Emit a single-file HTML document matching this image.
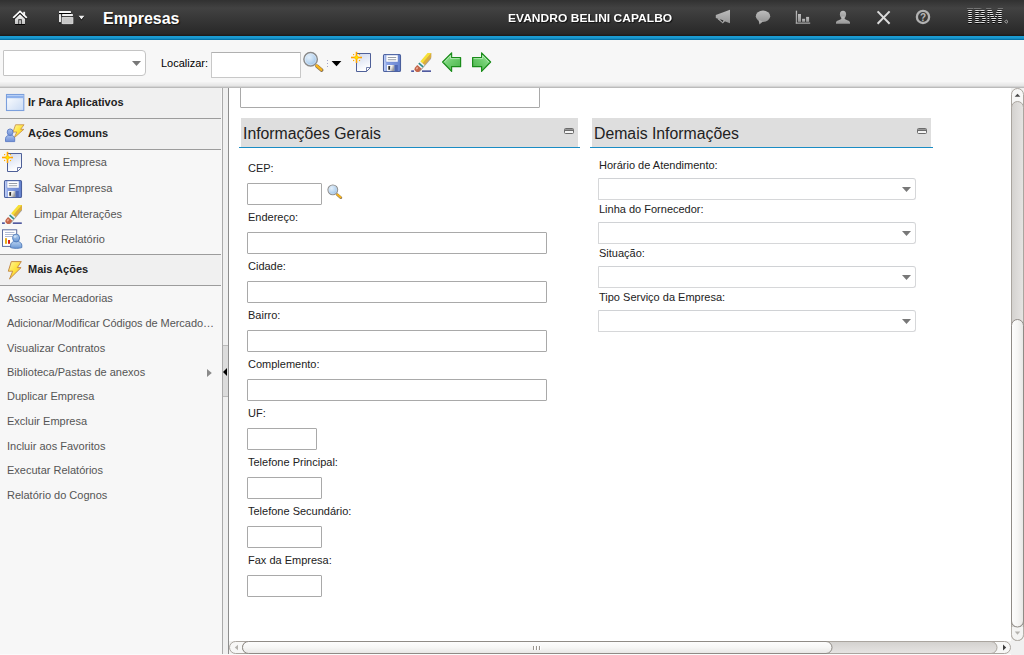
<!DOCTYPE html>
<html lang="pt-BR">
<head>
<meta charset="utf-8">
<title>Empresas</title>
<style>
html,body{margin:0;padding:0}
body{width:1024px;height:655px;position:relative;overflow:hidden;background:#fff;font-family:"Liberation Sans",Arial,sans-serif;font-size:11px;color:#222}
.abs,.abs-all *{position:absolute}
div,span,svg{position:absolute;box-sizing:border-box}
#hdr{left:0;top:0;width:1024px;height:36px;background:linear-gradient(#313131 0px,#424242 8px,#363636 20px,#282828 34px,#1e1e1e 35px,#1c1c1c 36px)}
#blue{left:0;top:36px;width:1024px;height:4px;background:linear-gradient(#1a9cd2 0,#1a9cd2 1px,#1b99cf 1px,#1b99cf 2px,#148ec4 2px,#148ec4 3px,#0673a6 3px)}
#tb{left:0;top:40px;width:1024px;height:48px;background:linear-gradient(#f7f7f7 0,#f7f7f7 42px,#f2f2f2 42px,#f2f2f2 43px,#eee 43px,#eee 44px,#eaeaea 44px,#eaeaea 45px,#e6e6e6 45px,#e6e6e6 46px,#d4d4d4 46px,#d4d4d4 47px,#bbb 47px,#bbb 48px)}
.t{white-space:nowrap;line-height:14px;height:14px}
.title{left:103px;top:9px;font-size:16px;font-weight:bold;color:#fff;line-height:20px;height:20px;text-shadow:1px 1px 1px #111}
.user{left:508px;top:11px;font-size:12px;font-weight:bold;color:#fff;line-height:14px;letter-spacing:.03px;transform:scaleY(.93);transform-origin:0 12px;text-shadow:1px 1px 1px #111}
.inp{background:#fff;border:1px solid #a9a9a9;border-radius:1px}
.sel{background:#fff;border:1px solid #d6d7d9;border-top-color:#d0d2d5;border-radius:0 3px 3px 0}
.sel:after{content:"";position:absolute;right:4px;top:8px;width:9px;height:5px;background:#787878;clip-path:polygon(0 0,100% 0,50% 100%)}
.sel.big:after{top:10px}
#left{left:0;top:88px;width:222px;height:566px;background:#f7f7f7}
.ph{left:0;width:221px;background:#f0f0f0;border-bottom:1px solid #9c9c9c}
.pht{left:28px;font-weight:bold;font-size:11px;color:#222}
.mi{left:34px;color:#555;font-size:11px}
.ma{left:7px;color:#555;font-size:11px}
#div{left:222px;top:88px;width:7px;height:566px;background:#f0f0f0;border-left:1px solid #aaa;border-right:1px solid #8e8e8e}
#main{left:229px;top:88px;width:782px;height:553px;background:#fff;overflow:hidden}
.sh{height:29px;background:#dedede}
.shl{height:1px;background:#1a8cc4}
.sht{font-size:15.8px;line-height:20px;height:20px;color:#222;white-space:nowrap;margin-top:1px}
.lb{font-size:11px;color:#222}
.min{width:10px;height:6px;border:1px solid #6b6b6b;background:linear-gradient(#959595 0,#959595 1px,#6b6b6b 1px,#6b6b6b 2px,#f4f4f4 2px);border-radius:1.5px}
</style>
</head>
<body>
<div id="hdr">
  <div class="t title">Empresas</div>
  <div class="t user">EVANDRO BELINI CAPALBO</div>

<svg id="hic" style="left:0;top:0" width="1024" height="36" viewBox="0 0 1024 36">
<defs>
<linearGradient id="gw" x1="0" y1="0" x2="0" y2="1"><stop offset="0" stop-color="#fafafa"/><stop offset="1" stop-color="#c2c2c2"/></linearGradient>
<linearGradient id="gg" x1="0" y1="0" x2="0" y2="1"><stop offset="0" stop-color="#bdbdbd"/><stop offset="1" stop-color="#969696"/></linearGradient>
</defs>
<!-- home -->
<g id="home">
 <g fill="#000" stroke="#000" opacity=".85" transform="translate(0,1)">
  <polyline points="13.2,17.9 20,11.4 26.8,17.9" fill="none" stroke-width="1.7"/>
  <polygon points="15,24 15,18.6 20,13.9 25,18.6 25,24" stroke="none"/>
 </g>
 <polygon points="15,24 15,18.6 20,13.9 25,18.6 25,24" fill="url(#gw)"/>
 <rect x="23.2" y="11.8" width="1.9" height="4" fill="#eee"/>
 <polyline points="13.2,17.9 20,11.4 26.8,17.9" fill="none" stroke="#fff" stroke-width="1.7"/>
 <polyline points="14.6,18.9 20,13.6 25.4,18.9" fill="none" stroke="#2c2c2c" stroke-width="0.9"/>
 <rect x="18.3" y="19.2" width="3.5" height="4.8" fill="#2e2e2e"/>
 <rect x="19.2" y="20.2" width="1.7" height="3.8" fill="#cfcfcf"/>
</g>
<!-- apps -->
<g id="apps">
 <g fill="#000" transform="translate(0,1)">
  <rect x="59" y="11" width="12" height="2.1" rx=".6"/>
  <rect x="59" y="14" width="2" height="8.2" rx=".5"/>
  <rect x="62" y="14" width="11" height="2"/>
  <rect x="62" y="17" width="11" height="7" rx=".6"/>
 </g>
 <rect x="59" y="11" width="12" height="2.1" rx=".6" fill="#f4f4f4"/>
 <rect x="59" y="14" width="2" height="8.2" rx=".5" fill="#e6e6e6"/>
 <rect x="62" y="14" width="11" height="2" rx=".4" fill="#f0f0f0"/>
 <rect x="62" y="17" width="11" height="7" rx=".6" fill="#c6c6c6" stroke="#e2e2e2" stroke-width=".6"/>
 <polygon points="78.6,16.7 84.4,16.7 81.5,20.4" fill="#000"/>
 <polygon points="78.6,15.8 84.4,15.8 81.5,19.5" fill="#ededed"/>
</g>
<!-- megaphone -->
<g fill="url(#gg)">
 <polygon points="715.8,15 730,9.8 730,23.3 715.8,18"/>
 <path d="M717.6,19 L722.8,23.6 L725.3,20.8 L723.9,20.2 L722.5,21.9 L719.2,18.9 Z"/>
 <path d="M720.3,19.3 L723.4,20.6 L722.6,21.5 L720.3,19.6 Z" fill="#2f2f2f"/>
</g>
<!-- chat -->
<g fill="url(#gg)">
 <ellipse cx="763" cy="16.2" rx="7.2" ry="5.7"/>
 <polygon points="758.6,20 759.4,24.4 763,21.6"/>
</g>
<!-- chart -->
<g fill="url(#gg)">
 <rect x="795.8" y="10.7" width="1.3" height="13"/>
 <rect x="795.8" y="22.6" width="14.4" height="1.2"/>
 <rect x="798" y="14" width="3" height="7.8"/>
 <rect x="802.1" y="18.8" width="3" height="3"/>
 <rect x="806.1" y="16.9" width="3" height="4.9"/>
</g>
<!-- user -->
<g fill="url(#gg)">
 <ellipse cx="843" cy="14.4" rx="3.1" ry="3.7"/>
 <path d="M841.3,16.5 L841.3,19 C840,20 836,20.6 836,22.6 L836,23.8 L850,23.8 L850,22.6 C850,20.6 846,20 844.7,19 L844.7,16.5 Z"/>
</g>
<!-- X -->
<g stroke="#dcdcdc" stroke-width="2" fill="none">
 <line x1="877.6" y1="11.4" x2="889.6" y2="23.8"/>
 <line x1="889.6" y1="11.4" x2="877.6" y2="23.8"/>
</g>
<!-- help -->
<circle cx="923" cy="16.9" r="6.1" fill="none" stroke="#b2b2b2" stroke-width="2.3"/>
<text x="923" y="20.6" text-anchor="middle" font-family="Liberation Sans, sans-serif" font-weight="bold" font-size="10" fill="#b8b8b8">?</text>
<!-- IBM -->
<mask id="ibml" maskUnits="userSpaceOnUse" x="960" y="0" width="50" height="36"><g fill="#fff"><rect x="960" y="8" width="50" height="1"/><rect x="960" y="10" width="50" height="1"/><rect x="960" y="12" width="50" height="1"/><rect x="960" y="14" width="50" height="1"/><rect x="960" y="16" width="50" height="1"/><rect x="960" y="18" width="50" height="1"/><rect x="960" y="20" width="50" height="1"/><rect x="960" y="22" width="50" height="1"/></g></mask>
<mask id="ibmd" maskUnits="userSpaceOnUse" x="960" y="0" width="50" height="36"><g fill="#fff"><rect x="960" y="9" width="50" height="1"/><rect x="960" y="11" width="50" height="1"/><rect x="960" y="13" width="50" height="1"/><rect x="960" y="15" width="50" height="1"/><rect x="960" y="17" width="50" height="1"/><rect x="960" y="19" width="50" height="1"/><rect x="960" y="21" width="50" height="1"/><rect x="960" y="23" width="50" height="1"/></g></mask>
<g font-family="Liberation Serif, serif" font-weight="bold" font-size="24">
 <text x="966.6" y="24.6" fill="#0c0c0c" stroke="#0c0c0c" stroke-width=".5" textLength="36.8" lengthAdjust="spacingAndGlyphs" mask="url(#ibmd)">IBM</text>
 <text x="966.6" y="23.8" fill="#e4e4e4" stroke="#e4e4e4" stroke-width=".5" textLength="36.8" lengthAdjust="spacingAndGlyphs" mask="url(#ibml)">IBM</text>
 <path d="M1006.4,20 L1008,21.6 L1006.4,23.2 L1004.8,21.6 Z" fill="none" stroke="#c8c8c8" stroke-width=".8"/>
</g>
</svg>
</div>
<div id="blue"></div>
<div id="tb">
  <div class="sel big" style="left:3px;top:10px;width:143px;height:26px;border-radius:1px 4px 4px 1px;border-color:#c4c4c4"></div>
  <div class="t" style="left:161px;top:16px;font-size:11px;color:#000">Localizar:</div>
  <div class="inp" style="left:211px;top:12px;width:90px;height:26px;border-color:#c8c8c8;border-top-color:#b0b0b0"></div>
</div>

<svg id="tbic" style="left:0;top:40px" width="1024" height="48" viewBox="0 40 1024 48">
<defs>
<radialGradient id="lens" cx=".38" cy=".35" r=".7"><stop offset="0" stop-color="#e4f0fb"/><stop offset=".55" stop-color="#bcd7f1"/><stop offset="1" stop-color="#93bde6"/></radialGradient>
<linearGradient id="pg" x1="0" y1="0" x2=".3" y2="1"><stop offset="0" stop-color="#cfd8ee"/><stop offset="1" stop-color="#ffffff"/></linearGradient>
<linearGradient id="fl" x1="0" y1="0" x2="1" y2="0"><stop offset="0" stop-color="#b4c6f4"/><stop offset=".2" stop-color="#8aa3e6"/><stop offset="1" stop-color="#6683d0"/></linearGradient>
<linearGradient id="sh" x1="0" y1="0" x2="1" y2=".4"><stop offset="0" stop-color="#ffffff"/><stop offset=".6" stop-color="#f4f4f4"/><stop offset="1" stop-color="#9a9a9a"/></linearGradient>
<linearGradient id="gr" x1="0" y1="0" x2="1" y2="1"><stop offset="0" stop-color="#a6e6a6"/><stop offset=".5" stop-color="#6ccc6c"/><stop offset="1" stop-color="#48b048"/></linearGradient>
<g id="mag">
 <line x1="6" y1="6.3" x2="10.7" y2="10.4" stroke="#6e5430" stroke-width="3.6" stroke-linecap="round" transform="translate(.35,.45)" opacity=".8"/>
 <line x1="6" y1="6.3" x2="10.6" y2="10.3" stroke="#f8b41a" stroke-width="2.5" stroke-linecap="round"/>
 <circle cx="0" cy="0" r="6.7" fill="url(#lens)" stroke="#8a8a8a" stroke-width="1.5"/>
 <circle cx="0" cy="0" r="5.6" fill="none" stroke="#fff" stroke-width=".6" opacity=".7"/>
</g>
<g id="newdoc">
 <path d="M.5,.5 H14.5 V14.5 L10.5,18.5 H.5 Z" fill="url(#pg)" stroke="#4f6098" stroke-width="1" stroke-linejoin="round"/>
 <path d="M14.5,14.5 H10.5 V18.5 Z" fill="#fff" stroke="#4f6098" stroke-width=".8" stroke-linejoin="round"/>
 <circle cx="0.5" cy="4.5" r="3.6" fill="#f7f7f7"/>
 <g stroke="#ffa200" stroke-linecap="butt">
  <line x1="-5" y1="4.5" x2="6" y2="4.5" stroke-width="1.6"/>
  <line x1="0.5" y1="-1.2" x2="0.5" y2="10" stroke-width="1.6"/>
 </g>
 <g fill="#ffb000"><rect x="-3" y="1" width="1.2" height="1.2"/><rect x="2.9" y="1" width="1.2" height="1.2"/><rect x="-3" y="6.9" width="1.2" height="1.2"/><rect x="2.9" y="6.9" width="1.2" height="1.2"/></g>
 <rect x="-1.5" y="2.5" width="4" height="4" fill="#ffb800" transform="rotate(45 .5 4.5)"/>
 <rect x="-.8" y="3.2" width="2.6" height="2.6" fill="#ffe400"/>
</g>
<g id="floppy">
 <rect x=".5" y=".5" width="17" height="17" rx="1.3" fill="url(#fl)" stroke="#4a5f9c" stroke-width="1.1"/>
 <rect x="1.2" y="1.4" width="1.3" height="15.4" fill="#c6d4f8" opacity=".8"/>
 <rect x="3" y="1" width="12" height="7" fill="#fff" stroke="#7088c8" stroke-width=".5"/>
 <rect x="4.8" y="3.1" width="8.4" height=".9" fill="#8d949f"/>
 <rect x="4.8" y="5.3" width="8.4" height=".9" fill="#8d949f"/>
 <rect x="11.6" y="11" width="3.2" height="6.2" fill="#4f68b2"/>
 <rect x="3.9" y="11" width="7.4" height="6.1" fill="url(#sh)"/>
 <rect x="5.3" y="12.1" width="1.8" height="3.7" rx=".4" fill="#2b2b2b"/>
</g>
<g id="eraser">
 <clipPath id="ec"><rect x="-1" y="0.1" width="21" height="19"/></clipPath>
 <rect x="0" y="17.4" width="2.8" height="1.5" fill="#3f4a96"/>
 <rect x="10.8" y="17.4" width="9" height="1.5" fill="#3f4a96"/>
 <g clip-path="url(#ec)"><g transform="translate(6.1,16.3) rotate(-49.5)">
  <rect x="-2.4" y="-2.8" width="30" height="5.6" rx="2.6" fill="#5a4a3c" opacity=".5" transform="translate(.2,.8)"/>
  <rect x="7.8" y="-2.8" width="20" height="3" fill="#f7e036"/>
  <rect x="7.8" y="0" width="20" height="2.8" fill="#dcae3c"/>
  <rect x="3" y="-2.8" width="5" height="5.6" fill="#eef4f4"/>
  <rect x="4.8" y="-2.8" width="1.6" height="5.6" fill="#2c8c8c"/>
  <path d="M3.2,-2.8 H0.2 A2.8,2.8 0 0 0 0.2,2.8 H3.2 Z" fill="#c4654a"/>
  <ellipse cx=".7" cy="-.9" rx="1.3" ry=".9" fill="#eaa890"/>
 </g></g>
</g>
<g id="larr">
 <path d="M0.6,9.8 L9.6,0.6 V5.3 H18.6 V14.5 H9.6 V19.2 Z" fill="url(#gr)" stroke="#1a8c1a" stroke-width="1.2" stroke-linejoin="round"/>
 <path d="M2.4,9.8 L8.6,3.4 V6.4 H17.6" fill="none" stroke="#d4f4d4" stroke-width=".8" opacity=".8"/>
</g>
</defs>
<use href="#mag" x="310.6" y="59.3"/>

<g fill="#a4a4c8"><rect x="327" y="60" width="1" height="1"/><rect x="327" y="63" width="1" height="1"/><rect x="327" y="66" width="1" height="1"/></g>
<polygon points="331.6,61 341.4,61 336.5,66.2" fill="#000"/>
<use href="#newdoc" x="356" y="53"/>
<use href="#floppy" x="383" y="54"/>
<use href="#eraser" x="411.2" y="53"/>
<use href="#larr" x="442" y="52.2"/>
<use href="#larr" transform="translate(491.2,52.2) scale(-1,1)"/>
</svg>
<div id="left">
  <div class="ph" style="top:0;height:31px"><div class="t pht" style="top:7px">Ir Para Aplicativos</div></div>
  <div class="ph" style="top:31px;height:31px"><div class="t pht" style="top:7px">Ações Comuns</div></div>
  <div class="t mi" style="top:67px">Nova Empresa</div>
  <div class="t mi" style="top:93px">Salvar Empresa</div>
  <div class="t mi" style="top:119px">Limpar Alterações</div>
  <div class="t mi" style="top:144px">Criar Relatório</div>
  <div class="ph" style="top:166px;height:32px;border-top:1px solid #9c9c9c"><div class="t pht" style="top:7px">Mais Ações</div></div>
  <div class="t ma" style="top:203px">Associar Mercadorias</div>
  <div class="t ma" style="top:228px;letter-spacing:-.055px">Adicionar/Modificar Códigos de Mercado…</div>
  <div class="t ma" style="top:253px">Visualizar Contratos</div>
  <div class="t ma" style="top:277px">Biblioteca/Pastas de anexos</div>
  <div class="t ma" style="top:301px">Duplicar Empresa</div>
  <div class="t ma" style="top:326px">Excluir Empresa</div>
  <div class="t ma" style="top:351px">Incluir aos Favoritos</div>
  <div class="t ma" style="top:375px">Executar Relatórios</div>
  <div class="t ma" style="top:400px">Relatório do Cognos</div>
</div>

<svg id="lic" style="left:0;top:88px" width="222" height="300" viewBox="0 88 222 300">
<defs>
<linearGradient id="wb" x1="0" y1="0" x2="1" y2="1"><stop offset="0" stop-color="#ffffff"/><stop offset="1" stop-color="#c9daf4"/></linearGradient>
<linearGradient id="pb" x1="0" y1="0" x2="0" y2="1"><stop offset="0" stop-color="#a9c0ec"/><stop offset="1" stop-color="#6f8fd6"/></linearGradient>
<linearGradient id="pb2" x1="0" y1="0" x2="0" y2="1"><stop offset="0" stop-color="#b4d0f0"/><stop offset="1" stop-color="#6c98d4"/></linearGradient>
<linearGradient id="bolt" x1="0" y1="0" x2="1" y2="1"><stop offset="0" stop-color="#fff9a0"/><stop offset=".5" stop-color="#ffe23c"/><stop offset="1" stop-color="#f2b824"/></linearGradient>
<g id="boltp"><path d="M3.6,.6 H13.6 L9.6,6.6 H13.4 L1.8,18 L5,10.2 H.6 Z" fill="url(#bolt)" stroke="#c58c48" stroke-width="1" stroke-linejoin="round"/></g>
</defs>
<!-- window icon -->
<rect x="6.5" y="94.5" width="17.3" height="16" fill="url(#wb)" stroke="#7b9fdc" stroke-width="1.1"/>
<rect x="7" y="95" width="16.3" height="3.2" fill="#8fb2ec"/>
<rect x="7" y="95" width="16.3" height="1" fill="#b7cff5"/>
<!-- person + bolt -->
<g transform="translate(12.5,124.3) scale(.85,.76)"><use href="#boltp"/></g>
<g stroke="#5b7cc4" stroke-width=".9" fill="url(#pb)">
 <path d="M5.5,141.6 V138.6 C5.5,136.6 7.4,135.6 8.4,135.2 L11.8,135.2 C12.8,135.6 14.7,136.6 14.7,138.6 V141.6 Z"/>
 <ellipse cx="10.1" cy="132.2" rx="2.9" ry="3.3"/>
</g>
<!-- new -->
<use href="#newdoc" x="7" y="153"/>
<use href="#floppy" x="4" y="180"/>
<use href="#eraser" x="2" y="205"/>
<!-- report -->
<g>
 <rect x="2.5" y="229.8" width="14.2" height="16.6" fill="#fff" stroke="#5c6c9e" stroke-width="1"/>
 <g fill="#a9b4d0"><rect x="5" y="232" width="9.4" height=".9"/><rect x="5" y="234" width="9.4" height=".9"/><rect x="5" y="236" width="9.4" height=".9"/></g>
 <rect x="5" y="238.2" width="2" height="5.6" fill="#e8ac14"/>
 <rect x="8" y="240" width="2" height="3.8" fill="#d42020"/>
 <g stroke="#4d78b8" stroke-width=".9" fill="url(#pb2)">
  <path d="M10.6,247.6 V245.2 C10.6,243 12.6,242 13.6,241.6 L18.6,241.6 C19.6,242 21.8,243 21.8,245.2 V247.6 C19,248.6 13.4,248.6 10.6,247.6 Z"/>
  <ellipse cx="16.1" cy="238" rx="3.5" ry="3.9"/>
 </g>
 <ellipse cx="15" cy="236.6" rx="1.5" ry="1.2" fill="#d6e6f8" opacity=".8"/>
</g>
<!-- bolt -->
<use href="#boltp" x="7.7" y="261"/>
<!-- submenu arrow -->
<polygon points="207,369 207,377 211.8,373" fill="#8a8a8a"/>
</svg>
<div id="div">
  <div style="left:0;top:257px;width:5px;height:52px;background:#dcdcdc;border-top:1px solid #bbb;border-bottom:1px solid #bbb"></div>
  <div style="left:0;top:280px;width:0;height:0;border-top:4px solid transparent;border-bottom:4px solid transparent;border-right:4px solid #000"></div>
</div>
<div id="main">
  <div class="inp" style="left:11px;top:-10px;width:300px;height:30px"></div>

  <div class="sh" style="left:12px;top:30px;width:337px"></div>
  <div class="shl" style="left:10px;top:59px;width:341px"></div>
  <div class="sht" style="left:14px;top:35px">Informações Gerais</div>
  <div class="min" style="left:335px;top:40px"></div>

  <div class="t lb" style="left:19px;top:73px">CEP:</div>
  <div class="inp" style="left:18px;top:95px;width:75px;height:22px"></div>
  <svg style="left:98px;top:96px" width="16" height="16" viewBox="-8 -8 22 22"><use href="#mag"/></svg>
  <div class="t lb" style="left:19px;top:122px">Endereço:</div>
  <div class="inp" style="left:18px;top:144px;width:300px;height:22px"></div>
  <div class="t lb" style="left:19px;top:171px">Cidade:</div>
  <div class="inp" style="left:18px;top:193px;width:300px;height:22px"></div>
  <div class="t lb" style="left:19px;top:220px">Bairro:</div>
  <div class="inp" style="left:18px;top:242px;width:300px;height:22px"></div>
  <div class="t lb" style="left:19px;top:269px">Complemento:</div>
  <div class="inp" style="left:18px;top:291px;width:300px;height:22px"></div>
  <div class="t lb" style="left:19px;top:318px">UF:</div>
  <div class="inp" style="left:18px;top:340px;width:70px;height:22px"></div>
  <div class="t lb" style="left:19px;top:367px">Telefone Principal:</div>
  <div class="inp" style="left:18px;top:389px;width:75px;height:22px"></div>
  <div class="t lb" style="left:19px;top:416px">Telefone Secundário:</div>
  <div class="inp" style="left:18px;top:438px;width:75px;height:22px"></div>
  <div class="t lb" style="left:19px;top:465px">Fax da Empresa:</div>
  <div class="inp" style="left:18px;top:487px;width:75px;height:22px"></div>

  <div class="sh" style="left:363px;top:30px;width:339px"></div>
  <div class="shl" style="left:361px;top:59px;width:343px"></div>
  <div class="sht" style="left:365px;top:35px">Demais Informações</div>
  <div class="min" style="left:688px;top:40px"></div>

  <div class="t lb" style="left:370px;top:70px">Horário de Atendimento:</div>
  <div class="sel" style="left:369px;top:90px;width:318px;height:22px"></div>
  <div class="t lb" style="left:370px;top:114px">Linha do Fornecedor:</div>
  <div class="sel" style="left:369px;top:134px;width:318px;height:22px"></div>
  <div class="t lb" style="left:370px;top:158px">Situação:</div>
  <div class="sel" style="left:369px;top:178px;width:318px;height:22px"></div>
  <div class="t lb" style="left:370px;top:202px">Tipo Serviço da Empresa:</div>
  <div class="sel" style="left:369px;top:222px;width:318px;height:22px"></div>
</div>

<svg id="vsb" style="left:1011px;top:88px" width="13" height="553" viewBox="0 0 13 553">
<defs>
<linearGradient id="vtr" x1="0" y1="0" x2="1" y2="0"><stop offset="0" stop-color="#d3d1ce"/><stop offset=".5" stop-color="#dddbd9"/><stop offset="1" stop-color="#e6e4e2"/></linearGradient>
<linearGradient id="vth" x1="0" y1="0" x2="1" y2="0"><stop offset="0" stop-color="#fdfdfd"/><stop offset=".5" stop-color="#f6f6f5"/><stop offset="1" stop-color="#e7e6e4"/></linearGradient>
</defs>
<rect x="0" y="0" width="13" height="553" fill="#f2f2f1"/>
<path d="M.5,546.5 V6.5 A6,6 0 0 1 12.5,6.5 V546.5 A6,6 0 0 1 .5,546.5 Z" fill="#f7f7f6" stroke="#aaa59f" stroke-width="1"/>
<path d="M.5,546.5 V19.5 A6,6 0 0 1 12.5,19.5 V546.5 A6,6 0 0 1 .5,546.5 Z" fill="url(#vtr)" stroke="#aaa59f" stroke-width="1"/>
<path d="M.5,546.5 A6,6 0 0 0 12.5,546.5" fill="none" stroke="#b5b1ab" stroke-width="1"/>
<path d="M.5,533 V237.5 A6,6 0 0 1 12.5,237.5 V533 A6,6 0 0 1 .5,533 Z" fill="url(#vth)" stroke="#8f8b86" stroke-width="1"/>
<path d="M.5,539 V546.5 A6,6 0 0 0 12.5,546.5 V539" fill="#f4f4f3" stroke="#b5b1ab" stroke-width="1"/>
<path d="M.5,533 A6,6 0 0 0 12.5,533" fill="url(#vth)" stroke="#8f8b86" stroke-width="1"/>
<polygon points="3.7,8.7 9.3,8.7 6.5,5.8" fill="#484848"/>
<polygon points="3.8,543.6 9.2,543.6 6.5,546.8" fill="#b4b2ae"/>
</svg>
<svg id="hsb" style="left:229px;top:641px" width="782" height="13" viewBox="0 0 782 13">
<defs>
<linearGradient id="htr" x1="0" y1="0" x2="0" y2="1"><stop offset="0" stop-color="#d3d1ce"/><stop offset=".5" stop-color="#dddbd9"/><stop offset="1" stop-color="#e6e4e2"/></linearGradient>
<linearGradient id="hth" x1="0" y1="0" x2="0" y2="1"><stop offset="0" stop-color="#fdfdfd"/><stop offset=".5" stop-color="#f6f6f5"/><stop offset="1" stop-color="#e7e6e4"/></linearGradient>
</defs>
<rect x="0" y="0" width="782" height="13" fill="#f2f2f1"/>
<path d="M6.5,.5 H775.5 A6,6 0 0 1 775.5,12.5 H6.5 A6,6 0 0 1 6.5,.5 Z" fill="#f7f7f6" stroke="#aaa59f" stroke-width="1"/>
<path d="M19.5,.5 H762 A6,6 0 0 1 762,12.5 H19.5 A6,6 0 0 1 19.5,.5 Z" fill="url(#htr)" stroke="#aaa59f" stroke-width="1"/>
<path d="M19.5,.5 H597 A6,6 0 0 1 597,12.5 H19.5 A6,6 0 0 1 19.5,.5 Z" fill="url(#hth)" stroke="#8f8b86" stroke-width="1"/>
<g fill="#9a958f"><rect x="304" y="5" width="1" height="4"/><rect x="307" y="5" width="1" height="4"/><rect x="310" y="5" width="1" height="4"/></g>
<g fill="#fff"><rect x="305" y="5" width="1" height="4"/><rect x="308" y="5" width="1" height="4"/><rect x="311" y="5" width="1" height="4"/></g>
<polygon points="9,3.8 9,9.2 5.8,6.5" fill="#b4b2ae"/>
<polygon points="774,3.6 774,9.4 777.2,6.5" fill="#3c3c3c"/>
</svg>
<div style="left:1011px;top:641px;width:13px;height:14px;background:#f0f0f0"></div>
<div style="left:0;top:654px;width:1011px;height:1px;background:#fbfbfb"></div>
</body>
</html>
